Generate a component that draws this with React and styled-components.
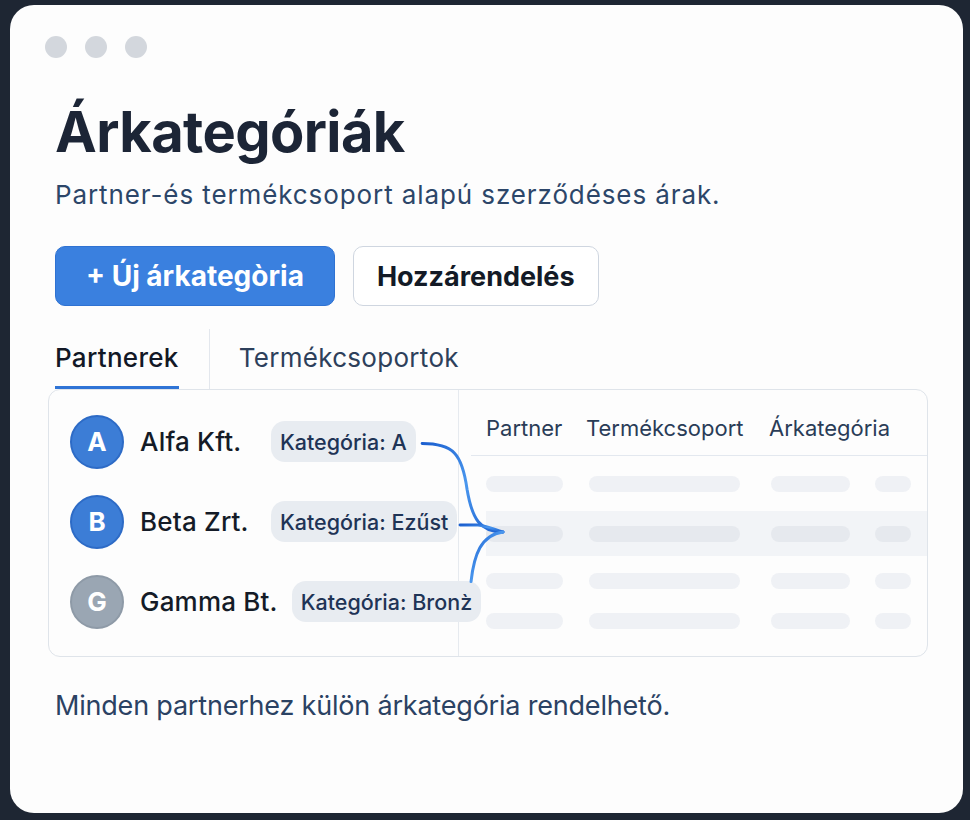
import React from "react";
import styled, { createGlobalStyle } from "styled-components";

const Global = createGlobalStyle`
  html, body { margin: 0; padding: 0; background: #1e2633; }
  body { font-family: Inter, "Noto Sans", sans-serif; -webkit-font-smoothing: antialiased; }
  * { box-sizing: border-box; }
`;

const Page = styled.div`
  padding: 5px 7px 7px 10px;
  height: 820px;
`;

const Card = styled.div`
  height: 808px;
  background: #fdfdfd;
  border-radius: 24px;
  padding: 31px 40px 0 45px;
  display: flex;
  flex-direction: column;
`;

const Dots = styled.div`
  display: flex;
  gap: 18px;
  margin: 0 0 42px -10px;
`;

const Dot = styled.span`
  width: 22px;
  height: 22px;
  border-radius: 50%;
  background: #d3d7dd;
`;

const Title = styled.h1`
  margin: 0;
  font-size: 56px;
  line-height: 64px;
  font-weight: 700;
  letter-spacing: -0.6px;
  color: #1c2536;
`;

const Subtitle = styled.p`
  margin: 15px 0 0;
  font-size: 26px;
  line-height: 32px;
  letter-spacing: 0.9px;
  color: #2c4669;
`;

const Actions = styled.div`
  display: flex;
  gap: 18px;
  margin-top: 35px;
`;

const Button = styled.button`
  height: 60px;
  padding: 0 ${(p) => (p.$primary ? "30px" : "23px")};
  border-radius: 10px;
  font-family: inherit;
  font-size: ${(p) => (p.$primary ? "28px" : "27px")};
  font-weight: 700;
  cursor: pointer;
  background: ${(p) => (p.$primary ? "#3a80df" : "#ffffff")};
  color: ${(p) => (p.$primary ? "#ffffff" : "#131a26")};
  border: 1.5px solid ${(p) => (p.$primary ? "#2f72d2" : "#cfd6e0")};
`;

const Tabs = styled.div`
  display: flex;
  align-items: stretch;
  height: 60px;
  margin-top: 23px;
`;

const Tab = styled.div`
  display: flex;
  align-items: center;
  font-size: 26px;
  letter-spacing: 0.3px;
  font-weight: ${(p) => (p.$active ? 500 : 400)};
  color: ${(p) => (p.$active ? "#121826" : "#2d405b")};
  border-bottom: 3px solid ${(p) => (p.$active ? "#2f74d6" : "transparent")};
`;

const TabDivider = styled.span`
  width: 1px;
  background: #e3e7ed;
  margin: 0 29px 0 30px;
`;

const Panel = styled.div`
  position: relative;
  margin-left: -7px;
  width: 880px;
  height: 268px;
  border: 1.5px solid #dfe4ea;
  border-radius: 12px;
  display: flex;
`;

const PartnerList = styled.div`
  width: 410px;
  border-right: 1.5px solid #e6eaef;
  padding: 25px 0 0 21px;
  display: flex;
  flex-direction: column;
  gap: 27px;
`;

const PartnerRow = styled.div`
  display: flex;
  align-items: center;
  height: 53px;
`;

const Avatar = styled.div`
  width: 54px;
  height: 54px;
  border-radius: 50%;
  flex: none;
  display: flex;
  align-items: center;
  justify-content: center;
  font-size: 26px;
  font-weight: 700;
  color: #fff;
  background: ${(p) => (p.$muted ? "#9aa6b3" : "#3c7dd6")};
  border: 2px solid ${(p) => (p.$muted ? "#8e9aa7" : "#2d6bc6")};
  margin-right: 16px;
`;

const PartnerName = styled.span`
  flex: none;
  min-width: 117px;
  margin-right: 14px;
  font-size: 26px;
  letter-spacing: 0.2px;
  font-weight: 500;
  color: #141b27;
  white-space: nowrap;
`;

const Pill = styled.span`
  flex: none;
  position: relative;
  z-index: 2;
  height: 41px;
  padding: 0 9px;
  border-radius: 14px;
  background: #e8ecf1;
  display: flex;
  align-items: center;
  font-size: 21.5px;
  font-weight: 500;
  color: #1f3456;
  white-space: nowrap;
`;

const Table = styled.div`
  flex: 1;
  display: flex;
  flex-direction: column;
`;

const Header = styled.div`
  height: 66px;
  margin-left: 12px;
  padding: 25px 0 0 15px;
  border-bottom: 1.5px solid #e3e8ef;
  display: grid;
  grid-template-columns: 100px 183px 104px 36px;
`;

const HeadCell = styled.span`
  font-size: 22px;
  color: #2a3c57;
  white-space: nowrap;
`;

const BodyRow = styled.div`
  height: ${(p) => p.$h}px;
  margin-left: 27px;
  display: grid;
  grid-template-columns: 103px 182px 104px 36px;
  align-items: center;
  background: ${(p) => (p.$hl ? "#f2f4f7" : "transparent")};
`;

const Bar = styled.span`
  display: block;
  height: 16px;
  border-radius: 8px;
  background: ${(p) => (p.$hl ? "#e6e9ee" : "#eff1f5")};
`;

const Connectors = styled.svg`
  position: absolute;
  left: 0;
  top: 0;
  width: 100%;
  height: 100%;
  pointer-events: none;
  z-index: 3;
  overflow: visible;
`;

const Footnote = styled.p`
  margin: 32px 0 0;
  font-size: 27px;
  color: #2b4263;
  letter-spacing: -0.2px;
`;

const partners = [
  { letter: "A", name: "Alfa Kft.", cat: "Kategória: A" },
  { letter: "B", name: "Beta Zrt.", cat: "Kategória: Ezűst" },
  { letter: "G", name: "Gamma Bt.", cat: "Kategória: Bronz̀", muted: true },
];

const widths = [77, 151, 79, 36];
const rows = [
  { h: 55 },
  { h: 45, hl: true },
  { h: 50 },
  { h: 30 },
];

export default function App() {
  return (
    <>
      <Global />
      <Page>
        <Card>
          <Dots>
            <Dot />
            <Dot />
            <Dot />
          </Dots>
          <Title>Árkategóriák</Title>
          <Subtitle>Partner-és termékcsoport alapú szerződéses árak.</Subtitle>
          <Actions>
            <Button $primary>+ Új árkategòria</Button>
            <Button>Hozzárendelés</Button>
          </Actions>
          <Tabs>
            <Tab $active>Partnerek</Tab>
            <TabDivider />
            <Tab>Termékcsoportok</Tab>
          </Tabs>
          <Panel>
            <PartnerList>
              {partners.map((p) => (
                <PartnerRow key={p.letter}>
                  <Avatar $muted={p.muted}>{p.letter}</Avatar>
                  <PartnerName>{p.name}</PartnerName>
                  <Pill>{p.cat}</Pill>
                </PartnerRow>
              ))}
            </PartnerList>
            <Table>
              <Header>
                <HeadCell>Partner</HeadCell>
                <HeadCell>Termékcsoport</HeadCell>
                <HeadCell>Árkategória</HeadCell>
              </Header>
              {rows.map((r, i) => (
                <BodyRow key={i} $h={r.h} $hl={r.hl}>
                  {widths.map((w, j) => (
                    <Bar key={j} $hl={r.hl} style={{ width: w }} />
                  ))}
                </BodyRow>
              ))}
            </Table>
            <Connectors viewBox="0 0 880 268" preserveAspectRatio="none">
              <defs>
                <linearGradient id="lnk" x1="0" y1="0" x2="1" y2="1">
                  <stop offset="0" stopColor="#1b5fcf" />
                  <stop offset="0.5" stopColor="#4a97ee" />
                  <stop offset="1" stopColor="#1b5fcf" />
                </linearGradient>
              </defs>
              <g fill="none" stroke="url(#lnk)" strokeWidth="3" strokeLinecap="round">
                <path d="M374 54 C 405 54, 414 64, 419 100 C 424 130, 432 143, 455 143" />
                <path d="M412 136 L 430 136 C 440 137, 447 141, 455 143" />
                <path d="M423 193 C 426 166, 433 146, 455 143" />
              </g>
            </Connectors>
          </Panel>
          <Footnote>Minden partnerhez külön árkategória rendelhető.</Footnote>
        </Card>
      </Page>
    </>
  );
}
